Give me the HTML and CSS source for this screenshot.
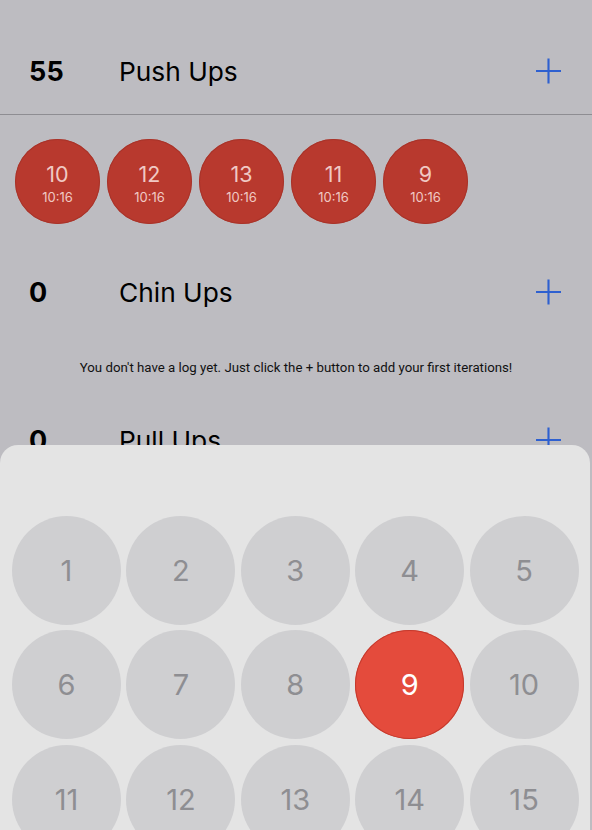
FILE: index.html
```html
<!DOCTYPE html>
<html>
<head>
<meta charset="utf-8">
<link rel="stylesheet" href="styles.css">
</head>
<body>
<div class="screen">
  <div class="row row-first">
    <div class="count">55</div>
    <div class="name">Push Ups</div>
    <svg class="plus" viewBox="0 0 26 26"><path d="M13 0V26M0 13H26" stroke="#2e60d0" stroke-width="2.2" fill="none"/></svg>
  </div>
  <div class="logs">
    <div class="log"><span class="log-num">10</span><span class="log-time">10:16</span></div>
    <div class="log"><span class="log-num">12</span><span class="log-time">10:16</span></div>
    <div class="log"><span class="log-num">13</span><span class="log-time">10:16</span></div>
    <div class="log"><span class="log-num">11</span><span class="log-time">10:16</span></div>
    <div class="log"><span class="log-num">9</span><span class="log-time">10:16</span></div>
  </div>
  <div class="row row-second">
    <div class="count">0</div>
    <div class="name">Chin Ups</div>
    <svg class="plus" viewBox="0 0 26 26"><path d="M13 0V26M0 13H26" stroke="#2e60d0" stroke-width="2.2" fill="none"/></svg>
  </div>
  <p class="empty">You don't have a log yet. Just click the + button to add your first iterations!</p>
  <div class="row row-third">
    <div class="count">0</div>
    <div class="name">Pull Ups</div>
    <svg class="plus" viewBox="0 0 26 26"><path d="M13 0V26M0 13H26" stroke="#2e60d0" stroke-width="2.2" fill="none"/></svg>
  </div>

  <div class="sheet">
    <div class="pad">
      <div class="key">1</div>
      <div class="key">2</div>
      <div class="key">3</div>
      <div class="key">4</div>
      <div class="key">5</div>
      <div class="key">6</div>
      <div class="key">7</div>
      <div class="key">8</div>
      <div class="key key-selected">9</div>
      <div class="key">10</div>
      <div class="key">11</div>
      <div class="key">12</div>
      <div class="key">13</div>
      <div class="key">14</div>
      <div class="key">15</div>
    </div>
  </div>
</div>
</body>
</html>
```

FILE: styles.css
```css
html, body {
  margin: 0;
  padding: 0;
}
body {
  background: #bdbcc1;
  font-family: Inter, "Noto Sans", sans-serif;
  color: #000;
  overflow: hidden;
}
.screen {
  position: relative;
  width: 592px;
  height: 830px;
  overflow: hidden;
}
.row {
  display: flex;
  align-items: center;
  height: 52px;
  padding: 0 31px 0 29px;
}
.row-first {
  padding-top: 45px;
  padding-bottom: 17px;
  border-bottom: 1px solid #8e8d92;
}
.row-second {
  margin-top: 42px;
}
.row-third {
  margin-top: 38px;
}
.count {
  width: 90px;
  font-size: 27px;
  font-weight: 700;
  letter-spacing: 0.3px;
}
.name {
  flex: 1;
  font-size: 26.3px;
  font-weight: 400;
}
.plus {
  width: 25px;
  height: 26px;
}
.logs {
  display: flex;
  gap: 7px;
  padding-left: 15px;
  margin-top: 24px;
}
.log {
  width: 85px;
  height: 85px;
  border-radius: 50%;
  background: #b8392e;
  box-shadow: inset 0 0 0 1px #a8342a;
  display: flex;
  flex-direction: column;
  align-items: center;
  justify-content: center;
  color: #f0c9c4;
}
.log-num {
  font-size: 21.5px;
  line-height: 24px;
  margin-top: 3px;
}
.log-time {
  font-size: 13px;
  line-height: 16px;
  margin-top: 3px;
}
.empty {
  margin: 42px 0 0;
  text-align: center;
  font-family: Roboto, "Noto Sans", sans-serif;
  font-size: 13.25px;
  line-height: 16px;
  color: #111;
}
.sheet {
  position: absolute;
  top: 445px;
  left: 0;
  right: 2px;
  bottom: 0;
  background: #e4e4e4;
  border-radius: 18px 18px 0 0;
  padding: 71px 0 0 12px;
}
.pad {
  display: grid;
  grid-template-columns: repeat(5, 109px);
  grid-auto-rows: 109px;
  column-gap: 5.4px;
  row-gap: 5.3px;
}
.key {
  border-radius: 50%;
  background: #cfcfd1;
  color: #8e8e92;
  font-size: 29px;
  display: flex;
  align-items: center;
  justify-content: center;
}
.key-selected {
  background: #e44b3c;
  box-shadow: inset 0 0 0 1px #c43a2d;
  color: #fff;
}
```
